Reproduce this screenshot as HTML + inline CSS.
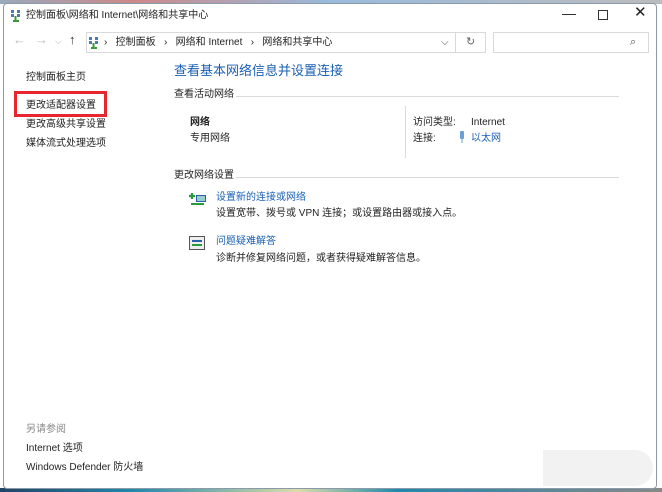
<!DOCTYPE html>
<html><head><meta charset="utf-8"><style>
*{margin:0;padding:0;box-sizing:border-box}
body{width:662px;height:492px;background:#fff;position:relative;overflow:hidden;font-family:"Liberation Sans","Noto Sans CJK SC",sans-serif;font-size:10px;color:#222}
.win{position:absolute;left:3px;top:3px;width:654px;height:486px;border:1px solid #8a9aa8;border-radius:4px;background:#fff}
.a{position:absolute;white-space:nowrap;line-height:12px}
.blue{color:#1a5fb4}
.hr{position:absolute;height:1px;background:#dadada}
.ic{position:absolute}
</style></head><body>
<div style="position:absolute;left:0;top:0;width:662px;height:4px;background:linear-gradient(90deg,#9ab,#c88 20%,#9bd 50%,#bbb)"></div>
<div style="position:absolute;left:0;top:488px;width:662px;height:4px;background:linear-gradient(90deg,#246,#28a 20%,#dda 45%,#28a 60%,#888)"></div>
<div class="win"></div>
<!-- title -->
<svg class="ic" style="left:11px;top:10px" width="11" height="12"><rect x="0" y="0" width="3" height="3" fill="#4a7ab8"/><rect x="6" y="0" width="3" height="3" fill="#4a7ab8"/><rect x="0" y="4" width="3" height="3" fill="#4a7ab8"/><rect x="6" y="4" width="3" height="3" fill="#4a7ab8"/><path d="M4.5 6v4M2 11h6" stroke="#3a9a3a" stroke-width="2"/></svg>
<div class="a" style="left:26px;top:10px;font-size:10px">控制面板\网络和 Internet\网络和共享中心</div>
<div class="a" style="left:562px;top:7px;font-size:14px">—</div>
<div style="position:absolute;left:598px;top:10px;width:10px;height:10px;border:1.3px solid #333"></div>
<div class="a" style="left:634px;top:7px;font-size:15px">✕</div>
<!-- nav -->
<div class="a" style="left:13px;top:34px;font-size:13px;color:#bbb">←</div>
<div class="a" style="left:35px;top:34px;font-size:13px;color:#bbb">→</div>
<div class="a" style="left:55px;top:35px;font-size:9px;color:#bbb">⌵</div>
<div class="a" style="left:69px;top:34px;font-size:13px;color:#333">↑</div>
<div style="position:absolute;left:86px;top:32px;width:370px;height:21px;border:1px solid #d9d9d9"></div>
<div style="position:absolute;left:456px;top:32px;width:30px;height:21px;border:1px solid #d9d9d9;border-left:none"></div>
<div style="position:absolute;left:493px;top:32px;width:156px;height:21px;border:1px solid #d9d9d9"></div>
<svg class="ic" style="left:89px;top:37px" width="11" height="12"><rect x="0" y="0" width="3" height="3" fill="#4a7ab8"/><rect x="6" y="0" width="3" height="3" fill="#4a7ab8"/><rect x="0" y="4" width="3" height="3" fill="#4a7ab8"/><rect x="6" y="4" width="3" height="3" fill="#4a7ab8"/><path d="M4.5 6v4M2 11h6" stroke="#3a9a3a" stroke-width="2"/></svg>
<div class="a" style="left:104px;top:37px">›&nbsp;&nbsp;&nbsp;控制面板&nbsp;&nbsp;&nbsp;›&nbsp;&nbsp;&nbsp;网络和 Internet&nbsp;&nbsp;&nbsp;›&nbsp;&nbsp;&nbsp;网络和共享中心</div>
<div class="a" style="left:441px;top:37px;color:#555">⌵</div>
<div class="a" style="left:466px;top:36px;color:#666;font-size:11px">↻</div>
<div class="a" style="left:630px;top:36px;color:#555;font-size:11px">⌕</div>
<!-- left -->
<div class="a" style="left:26px;top:72px">控制面板主页</div>
<div style="position:absolute;left:14px;top:91px;width:93px;height:26px;border:3px solid #e8262d"></div>
<div class="a" style="left:26px;top:100px">更改适配器设置</div>
<div class="a" style="left:26px;top:119px">更改高级共享设置</div>
<div class="a" style="left:26px;top:138px">媒体流式处理选项</div>
<div class="a" style="left:26px;top:424px;color:#888">另请参阅</div>
<div class="a" style="left:26px;top:443px">Internet 选项</div>
<div class="a" style="left:26px;top:462px">Windows Defender 防火墙</div>
<!-- main -->
<div class="a blue" style="left:174px;top:63px;font-size:13px;line-height:15px">查看基本网络信息并设置连接</div>
<div class="a" style="left:174px;top:89px">查看活动网络</div>
<div class="hr" style="left:236px;top:96px;width:383px"></div>
<div class="a" style="left:190px;top:117px;font-weight:bold">网络</div>
<div class="a" style="left:190px;top:133px">专用网络</div>
<div style="position:absolute;left:405px;top:106px;width:1px;height:52px;background:#dadada"></div>
<div class="a" style="left:413px;top:117px">访问类型:</div>
<div class="a" style="left:471px;top:117px">Internet</div>
<div class="a" style="left:413px;top:133px">连接:</div>
<svg class="ic" style="left:459px;top:131px" width="6" height="12"><rect x="1" y="0" width="4" height="8" rx="1" fill="#6aa0d8"/><path d="M3 8v4" stroke="#6aa0d8"/></svg>
<div class="a blue" style="left:471px;top:133px">以太网</div>
<div class="a" style="left:174px;top:170px">更改网络设置</div>
<div class="hr" style="left:236px;top:177px;width:383px"></div>
<svg class="ic" style="left:188px;top:191px" width="20" height="16"><path d="M4 2v6M1 5h6" stroke="#2a9a3a" stroke-width="2.2"/><rect x="8" y="4" width="10" height="7" fill="#2b5fa8"/><rect x="9" y="5" width="8" height="5" fill="#9cc"/><path d="M3 13h13" stroke="#2a9a3a" stroke-width="2"/></svg>
<div class="a blue" style="left:216px;top:192px">设置新的连接或网络</div>
<div class="a" style="left:216px;top:208px">设置宽带、拨号或 VPN 连接；或设置路由器或接入点。</div>
<svg class="ic" style="left:189px;top:236px" width="16" height="14"><rect x="0.5" y="0.5" width="15" height="13" fill="#eee" stroke="#555"/><path d="M3 5h10" stroke="#2b5fa8" stroke-width="2"/><path d="M3 9h10" stroke="#2a9a3a" stroke-width="2"/></svg>
<div class="a blue" style="left:216px;top:236px">问题疑难解答</div>
<div class="a" style="left:216px;top:253px">诊断并修复网络问题，或者获得疑难解答信息。</div>
<div style="position:absolute;left:543px;top:450px;width:110px;height:36px;background:#f2f2f2;border-radius:0 18px 18px 0"></div>
</body></html>
